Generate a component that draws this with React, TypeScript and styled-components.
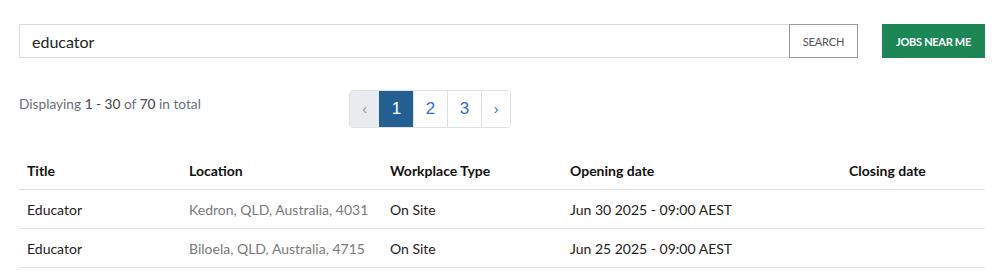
import React from "react";
import styled, { createGlobalStyle } from "styled-components";

const GlobalStyle = createGlobalStyle`
  body {
    margin: 0;
    background: #ffffff;
    font-family: Lato, "Open Sans", sans-serif;
    color: #222222;
  }
`;

type Job = {
  title: string;
  location: string;
  workplace: string;
  opening: string;
  closing: string;
};

const jobs: Job[] = [
  {
    title: "Educator",
    location: "Kedron, QLD, Australia, 4031",
    workplace: "On Site",
    opening: "Jun 30 2025 - 09:00 AEST",
    closing: "",
  },
  {
    title: "Educator",
    location: "Biloela, QLD, Australia, 4715",
    workplace: "On Site",
    opening: "Jun 25 2025 - 09:00 AEST",
    closing: "",
  },
];

const App: React.FC = () => {
  return (
    <React.Fragment>
      <GlobalStyle />
      <Page>
        <SearchRow>
          <SearchInput defaultValue="educator" />
          <SearchButton type="button">Search</SearchButton>
          <NearButton type="button">Jobs near me</NearButton>
        </SearchRow>

        <ResultBar>
          <Summary>
            Displaying <b>1 - 30</b> of <b>70</b> in total
          </Summary>
          <Pagination>
            <PageItem $kind="disabled">‹</PageItem>
            <PageItem $kind="active">1</PageItem>
            <PageItem>2</PageItem>
            <PageItem>3</PageItem>
            <PageItem $kind="arrow">›</PageItem>
          </Pagination>
        </ResultBar>

        <Table>
          <colgroup>
            <col style={{ width: 162 }} />
            <col style={{ width: 201 }} />
            <col style={{ width: 180 }} />
            <col style={{ width: 279 }} />
            <col style={{ width: 144 }} />
          </colgroup>
          <thead>
            <tr>
              <Th>Title</Th>
              <Th>Location</Th>
              <Th>Workplace Type</Th>
              <Th>Opening date</Th>
              <Th>Closing date</Th>
            </tr>
          </thead>
          <tbody>
            {jobs.map((job, i) => (
              <tr key={i}>
                <Td>{job.title}</Td>
                <Td $muted>{job.location}</Td>
                <Td>{job.workplace}</Td>
                <Td>{job.opening}</Td>
                <Td>{job.closing}</Td>
              </tr>
            ))}
          </tbody>
        </Table>
      </Page>
    </React.Fragment>
  );
};

const Page = styled.div`
  padding: 24px 22px 0 19px;
`;

const SearchRow = styled.div`
  display: flex;
  align-items: stretch;
  height: 34px;
`;

const SearchInput = styled.input`
  flex: 1;
  box-sizing: border-box;
  height: 34px;
  border: 1px solid #dcdcdc;
  border-right: none;
  padding: 0 12px;
  font-family: Lato, sans-serif;
  font-size: 16px;
  color: #222;
  outline: none;
`;

const SearchButton = styled.button`
  width: 69px;
  box-sizing: border-box;
  border: 1px solid #9a9a9a;
  background: #fff;
  color: #555;
  font-family: Lato, sans-serif;
  font-size: 11px;
  text-transform: uppercase;
  letter-spacing: -0.1px;
  padding: 0;
  cursor: pointer;
`;

const NearButton = styled.button`
  margin-left: 24px;
  width: 103px;
  border: none;
  background: #1c8655;
  color: #fff;
  font-family: Lato, sans-serif;
  font-size: 11px;
  font-weight: 700;
  text-transform: uppercase;
  letter-spacing: -0.3px;
  padding: 0;
  cursor: pointer;
`;

const ResultBar = styled.div`
  display: flex;
  align-items: flex-start;
  margin-top: 32px;
`;

const Summary = styled.div`
  width: 330px;
  padding-top: 5px;
  font-size: 13.7px;
  color: #6b6e78;

  b {
    font-weight: 500;
    color: #4a4d56;
  }
`;

const Pagination = styled.div`
  display: flex;
  height: 38px;
  border: 1px solid #dee2e6;
  border-radius: 4px;
  overflow: hidden;
  box-sizing: border-box;
`;

const PageItem = styled.div<{ $kind?: "active" | "disabled" | "arrow" }>`
  display: flex;
  align-items: center;
  justify-content: center;
  box-sizing: border-box;
  width: ${(p) => (p.$kind === "disabled" || p.$kind === "arrow" ? "29px" : "34px")};
  font-family: "Liberation Sans", Arial, sans-serif;
  font-size: ${(p) => (p.$kind === "disabled" || p.$kind === "arrow" ? "14px" : "17px")};
  border-left: ${(p) => (p.$kind === "disabled" ? "none" : "1px solid #dee2e6")};
  background: ${(p) =>
    p.$kind === "active" ? "#245f91" : p.$kind === "disabled" ? "#e9ecef" : "#fff"};
  color: ${(p) =>
    p.$kind === "active" ? "#fff" : p.$kind === "disabled" ? "#8a9096" : "#2f6fd0"};
  border-color: ${(p) => (p.$kind === "active" ? "#245f91" : "#dee2e6")};
`;

const Table = styled.table`
  width: 966px;
  margin-top: 23px;
  border-collapse: collapse;
  table-layout: fixed;
  font-size: 14px;
`;

const Th = styled.th`
  text-align: left;
  font-weight: 700;
  color: #111;
  height: 38px;
  padding: 0 8px;
  border-bottom: 1px solid #dee2e6;
  white-space: nowrap;
`;

const Td = styled.td<{ $muted?: boolean }>`
  height: 38px;
  padding: 0 8px;
  color: ${(p) => (p.$muted ? "#7a7a7a" : "#222")};
  border-bottom: 1px solid #dee2e6;
  white-space: nowrap;
`;

export default App;
